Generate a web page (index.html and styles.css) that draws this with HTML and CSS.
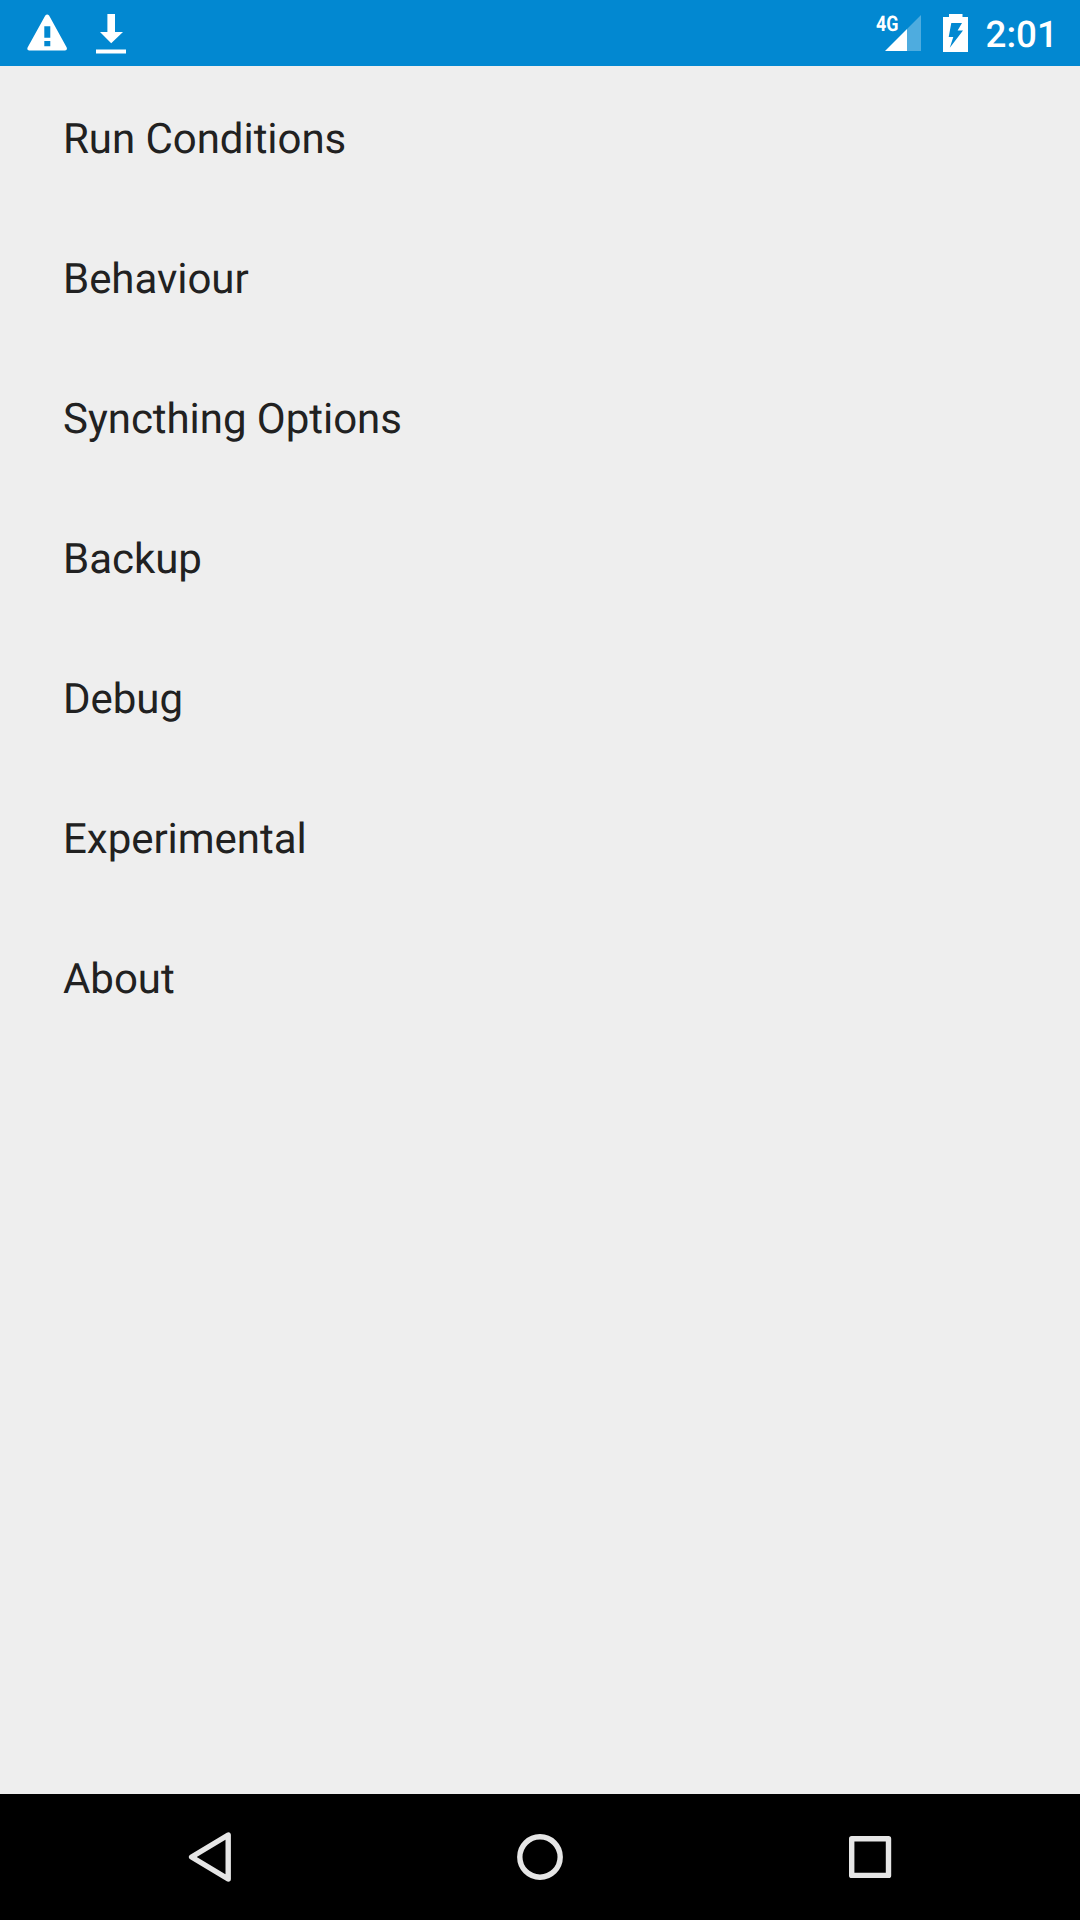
FILE: index.html
```html
<!DOCTYPE html>
<html lang="en">
<head>
<meta charset="utf-8">
<title>Settings</title>
<link rel="stylesheet" href="styles.css">
</head>
<body>
<div class="screen">
  <header class="status-bar">
    <div class="notifications">
      <svg width="40" height="66" viewBox="27 0 40 66">
        <path fill="#fff" fill-rule="evenodd" d="M45.3 15.6Q47.2 13.4 49.1 15.6L66.7 47.6Q67.6 50.4 65 50.4H29.2Q26.6 50.4 27.6 47.6ZM44.3 26.2V37.8H50.3V26.2ZM44.3 41V46.2H50.3V41Z"/>
      </svg>
      <svg width="30" height="66" viewBox="96 0 30 66">
        <path fill="#fff" d="M107.4 14H115V32H123L111.2 43.3L100 32H107.4ZM96 49.4H126V53.5H96Z"/>
      </svg>
    </div>
    <div class="system">
      <svg class="signal" width="46" height="66" viewBox="875 0 46 66">
        <path fill="#fff" fill-opacity=".3" d="M907 29L921 15V51H907Z"/>
        <path fill="#fff" d="M885 51L907 29V51Z"/>
        <text class="network" x="876" y="31" textLength="22.5" lengthAdjust="spacingAndGlyphs">4G</text>
      </svg>
      <svg width="25" height="66" viewBox="943 0 25 66">
        <path fill="#fff" fill-rule="evenodd" d="M949 14H962.5V17H968V52H943V17H949ZM951.3 23L948.7 37H953.3L949.8 47.8L963 30.4H957.6L962 23Z"/>
      </svg>
      <time class="clock">2:01</time>
    </div>
  </header>
  <main class="settings">
    <div class="item">Run Conditions</div>
    <div class="item">Behaviour</div>
    <div class="item">Syncthing Options</div>
    <div class="item">Backup</div>
    <div class="item">Debug</div>
    <div class="item">Experimental</div>
    <div class="item">About</div>
  </main>
  <nav class="nav-bar">
    <svg class="nav-icon" viewBox="0 0 330 126"><path d="M146.6 63L183.2 41V85Z"/></svg>
    <svg class="nav-icon" viewBox="0 0 330 126"><circle cx="165" cy="63" r="20.2"/></svg>
    <svg class="nav-icon" viewBox="0 0 330 126"><rect x="146.7" y="44.8" width="36.8" height="36.6"/></svg>
  </nav>
</div>
</body>
</html>
```
FILE: styles.css
```css
body {
  margin: 0;
  font-family: Roboto, sans-serif;
  text-rendering: geometricPrecision;
}

.screen {
  display: flex;
  flex-direction: column;
  width: 1080px;
  height: 1920px;
  background: #eee;
}

.status-bar {
  display: flex;
  justify-content: space-between;
  height: 66px;
  padding: 0 0 0 27px;
  background: #0288d1;
}

.notifications {
  display: flex;
  gap: 29px;
}

.system {
  display: flex;
  width: 205px;
}

.signal {
  margin-right: 22px;
}

.network {
  fill: #fff;
  font-size: 21.5px;
  font-weight: 700;
}

.clock {
  margin-left: 17.5px;
  color: #fff;
  font-size: 36.75px;
  font-weight: 500;
  line-height: 70px;
}

.settings {
  flex: 1;
  padding-top: 4px;
}

.item {
  height: 140px;
  padding-left: 63px;
  color: #212121;
  font-size: 42px;
  line-height: 140px;
  letter-spacing: -0.04px;
}

.nav-bar {
  display: flex;
  justify-content: center;
  height: 126px;
  background: #000;
}

.nav-icon {
  width: 330px;
  height: 126px;
  fill: none;
  stroke: #e6e6e6;
  stroke-width: 5.4;
  stroke-linejoin: round;
}
```
